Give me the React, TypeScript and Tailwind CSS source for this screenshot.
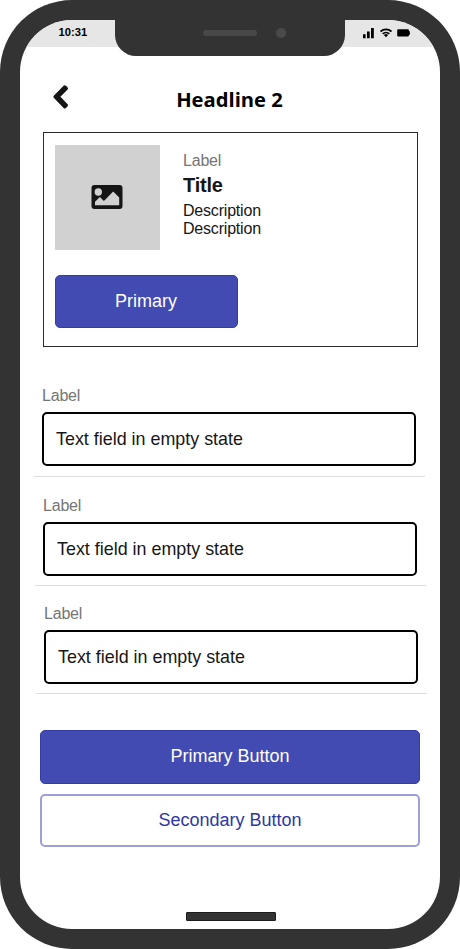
/**
 * Phone mockup: a card with an image placeholder, three empty
 * text fields and a primary / secondary button pair.
 */

interface FieldProps {
  label: string;
  placeholder: string;
  className: string;
}

function StatusBar() {
  return (
    <div className="flex h-[27px] shrink-0 items-start justify-between bg-[#e6e6e6] pl-[38.5px] pr-[29px]">
      <span className="mt-[4px] text-[11.2px] leading-4 font-bold text-black">10:31</span>
      <div className="mt-[7px] flex items-center text-black">
        <svg className="h-[12px] w-[12px]" viewBox="0 0 12 12" fill="currentColor">
          <path d="M0 7.3h2.6V11.2H0zM4 4.6h2.7v6.6H4zM8 1h2.8v10.2H8z" />
        </svg>
        <svg className="ml-[5px] h-[12px] w-[12px]" viewBox="0 0 12 12" fill="none" stroke="currentColor" strokeWidth={1.8}>
          <path d="M0.5 4.6C3.5 1.6 8.5 1.6 11.5 4.6" />
          <path d="M2.7 6.9C4.6 5.1 7.4 5.1 9.3 6.9" />
          <path d="M3.9 8.1a3 3 0 0 1 4.2 0L6 10.2z" fill="currentColor" stroke="none" />
        </svg>
        <svg className="ml-[5px] h-[12px] w-[14px]" viewBox="0 0 14 12" fill="currentColor">
          <path d="M1.2 2.3h9.7a1 1 0 0 1 1 1v.9h1v3.5h-1v.9a1 1 0 0 1-1 1H1.2a1 1 0 0 1-1-1V3.3a1 1 0 0 1 1-1z" />
        </svg>
      </div>
    </div>
  );
}

function Notch() {
  return (
    <div className="absolute -top-px left-[94.5px] flex h-[36.5px] w-[230px] items-start rounded-b-[21px] bg-[#333333]">
      <div className="mt-[11px] ml-[88px] h-[6px] w-[54.5px] rounded-full bg-[#484848]" />
      <div className="mt-[9px] ml-[18.5px] h-[10px] w-[10px] rounded-full bg-[#4a4a4a]" />
    </div>
  );
}

function Header() {
  return (
    <header className="relative flex h-[85px] shrink-0 items-start justify-center">
      <button className="absolute top-[37px] left-[33px]" aria-label="Back">
        <svg className="h-[26px] w-[16px]" viewBox="0 0 16 26" fill="#151515">
          <path d="M10.6 1.8 1 11.5a1.8 1.8 0 0 0 0 2.5l9.6 9.9a1.7 1.7 0 0 0 2.4 0l1.4-1.4a1.7 1.7 0 0 0 0-2.4L7.4 12.7l7-7a1.7 1.7 0 0 0 0-2.4L13 1.8a1.7 1.7 0 0 0-2.4 0z" />
        </svg>
      </button>
      <h1 className="mt-[38px] mr-px font-['Open_Sans',sans-serif] text-[20.2px] leading-[28px] font-bold text-black">
        Headline 2
      </h1>
    </header>
  );
}

function Card() {
  return (
    <section className="mx-[22.5px] h-[214.5px] w-[375px] shrink-0 border-[1.5px] border-[#2b2b2b] pt-[12px] pl-[11px]">
      <div className="flex">
        <div className="flex h-[104.5px] w-[105.5px] items-center justify-center bg-[#d1d1d1]">
          <svg className="h-[24px] w-[32px]" viewBox="0 0 32 24">
            <rect x="0.5" y="0" width="31" height="24" rx="3" fill="#151515" />
            <circle cx="7.3" cy="7" r="3.7" fill="#d1d1d1" />
            <path d="M4 20.2v-3.4l4.9-4.9 4 4 9.3-9.3 6 6v7.6z" fill="#d1d1d1" />
          </svg>
        </div>
        <div className="ml-[23px] pt-[7px] text-[16px] leading-[18px] tracking-[-0.2px] text-[#161616]">
          <p className="text-[#757575]">Label</p>
          <p className="mt-[3px] mb-[4px] text-[20px] leading-[24px] font-bold">Title</p>
          <p className="pt-px">Description</p>
          <p>Description</p>
        </div>
      </div>
      <button className="mt-[25px] flex h-[53.5px] w-[183px] items-center justify-center rounded-[5px] border border-[#343da6] bg-[#424bb2] pb-[0.5px] text-[18px] text-white">
        Primary
      </button>
    </section>
  );
}

function Field({ label, placeholder, className }: FieldProps) {
  return (
    <div className={`${className} w-[391px] shrink-0 border-b border-[#dedede] px-[8.5px]`}>
      <label className="block pt-px text-[16px] leading-[18px] tracking-[-0.2px] text-[#757575]">{label}</label>
      <div className="mt-[7px] flex h-[54px] w-[374px] items-center rounded-[5px] border-2 border-black pl-[12px] text-[17.9px] text-[#161616]">
        {placeholder}
      </div>
    </div>
  );
}

export default function App() {
  return (
    <div className="h-[949px] w-[460px] overflow-hidden bg-white font-['Liberation_Sans',Arial,sans-serif]">
      <div className="h-full w-full rounded-[72px] bg-[#333333] p-[20px]">
        <main className="relative flex h-full w-full flex-col overflow-hidden rounded-[52px] bg-white">
          <StatusBar />
          <Notch />
          <Header />
          <Card />
          <Field label="Label" placeholder="Text field in empty state" className="mt-[39.5px] ml-[13.5px] h-[91px]" />
          <Field label="Label" placeholder="Text field in empty state" className="mt-[19px] ml-[14.5px] h-[90px]" />
          <Field label="Label" placeholder="Text field in empty state" className="mt-[18px] ml-[15.5px] h-[90px]" />
          <div className="mt-[36px] ml-[20px] flex w-[380px] flex-col gap-[10px] text-[18px]">
            <button className="h-[54px] rounded-[5px] border border-[#343da6] bg-[#424bb2] pb-px text-white">
              Primary Button
            </button>
            <button className="h-[53px] rounded-[5px] border-2 border-[#9ca0d6] bg-white text-[#2e37a1]">
              Secondary Button
            </button>
          </div>
          <div className="mt-auto mb-[8px] ml-[165.5px] h-[9px] w-[90.5px] rounded-[1px] border border-[#1c1c1c] bg-[#333333]" />
        </main>
      </div>
    </div>
  );
}
